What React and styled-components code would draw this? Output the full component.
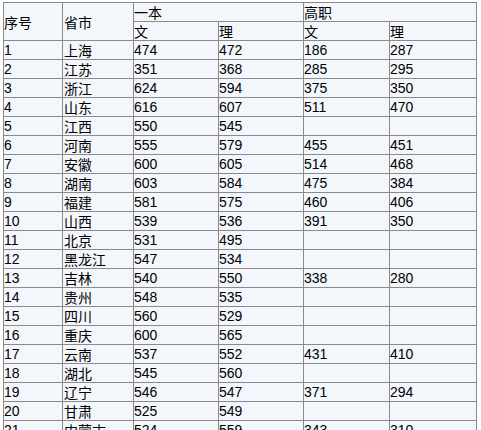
import styled, { createGlobalStyle } from "styled-components";

const GlobalStyle = createGlobalStyle`
    html, body {
        margin: 0;
        padding: 0;
        background: #ffffff;
    }
    body {
        font-family: "Liberation Sans", "Noto Sans CJK SC", sans-serif;
    }
`;

const Page = styled.div`
    padding: 2px 0 0 3px;
`;

const Table = styled.table`
    border-collapse: collapse;
    background: #f3f7fc;
    border: 1px solid #3a3a3a;
    font-size: 14px;
    color: #000;
    table-layout: fixed;
    width: 474px;
`;

const Cell = styled.td`
    border: 1px solid #8a8a8a;
    padding: 0 0 0 ${({$pad}) => $pad || 0}px;
    height: 18px;
    line-height: 18px;
    text-align: left;
    vertical-align: middle;
    white-space: nowrap;
    overflow: hidden;
    font-family: ${({$zh}) => $zh ? '"Noto Sans CJK SC", sans-serif' : '"Liberation Sans", "Noto Sans CJK SC", sans-serif'};
`;

const HeadCell = styled(Cell).attrs({as: "th"})`
    font-weight: normal;
    font-family: "Noto Sans CJK SC", sans-serif;
    vertical-align: ${({$top}) => $top ? "top" : "middle"};
`;

const rows = [
    ["1", "上海", "474", "472", "186", "287"],
    ["2", "江苏", "351", "368", "285", "295"],
    ["3", "浙江", "624", "594", "375", "350"],
    ["4", "山东", "616", "607", "511", "470"],
    ["5", "江西", "550", "545", "", ""],
    ["6", "河南", "555", "579", "455", "451"],
    ["7", "安徽", "600", "605", "514", "468"],
    ["8", "湖南", "603", "584", "475", "384"],
    ["9", "福建", "581", "575", "460", "406"],
    ["10", "山西", "539", "536", "391", "350"],
    ["11", "北京", "531", "495", "", ""],
    ["12", "黑龙江", "547", "534", "", ""],
    ["13", "吉林", "540", "550", "338", "280"],
    ["14", "贵州", "548", "535", "", ""],
    ["15", "四川", "560", "529", "", ""],
    ["16", "重庆", "600", "565", "", ""],
    ["17", "云南", "537", "552", "431", "410"],
    ["18", "湖北", "545", "560", "", ""],
    ["19", "辽宁", "546", "547", "371", "294"],
    ["20", "甘肃", "525", "549", "", ""],
    ["21", "内蒙古", "524", "559", "343", "310"],
];

const widths = [59, 71, 85, 85, 86, 87];

const App = () => {
    return (
        <Page>
            <GlobalStyle />
            <Table>
                <colgroup>
                    {widths.map((w, i) => <col key={i} style={{width: w}} />)}
                </colgroup>
                <thead>
                    <tr>
                        <HeadCell rowSpan={2}>序号</HeadCell>
                        <HeadCell rowSpan={2} $pad={1}>省市</HeadCell>
                        <HeadCell colSpan={2}>一本</HeadCell>
                        <HeadCell colSpan={2}>高职</HeadCell>
                    </tr>
                    <tr>
                        <HeadCell>文</HeadCell>
                        <HeadCell>理</HeadCell>
                        <HeadCell>文</HeadCell>
                        <HeadCell>理</HeadCell>
                    </tr>
                </thead>
                <tbody>
                    {rows.map(r => (
                        <tr key={r[0]}>
                            <Cell>{r[0]}</Cell>
                            <Cell $zh $pad={1}>{r[1]}</Cell>
                            <Cell>{r[2]}</Cell>
                            <Cell>{r[3]}</Cell>
                            <Cell>{r[4]}</Cell>
                            <Cell>{r[5]}</Cell>
                        </tr>
                    ))}
                </tbody>
            </Table>
        </Page>
    );
};

export default App;
